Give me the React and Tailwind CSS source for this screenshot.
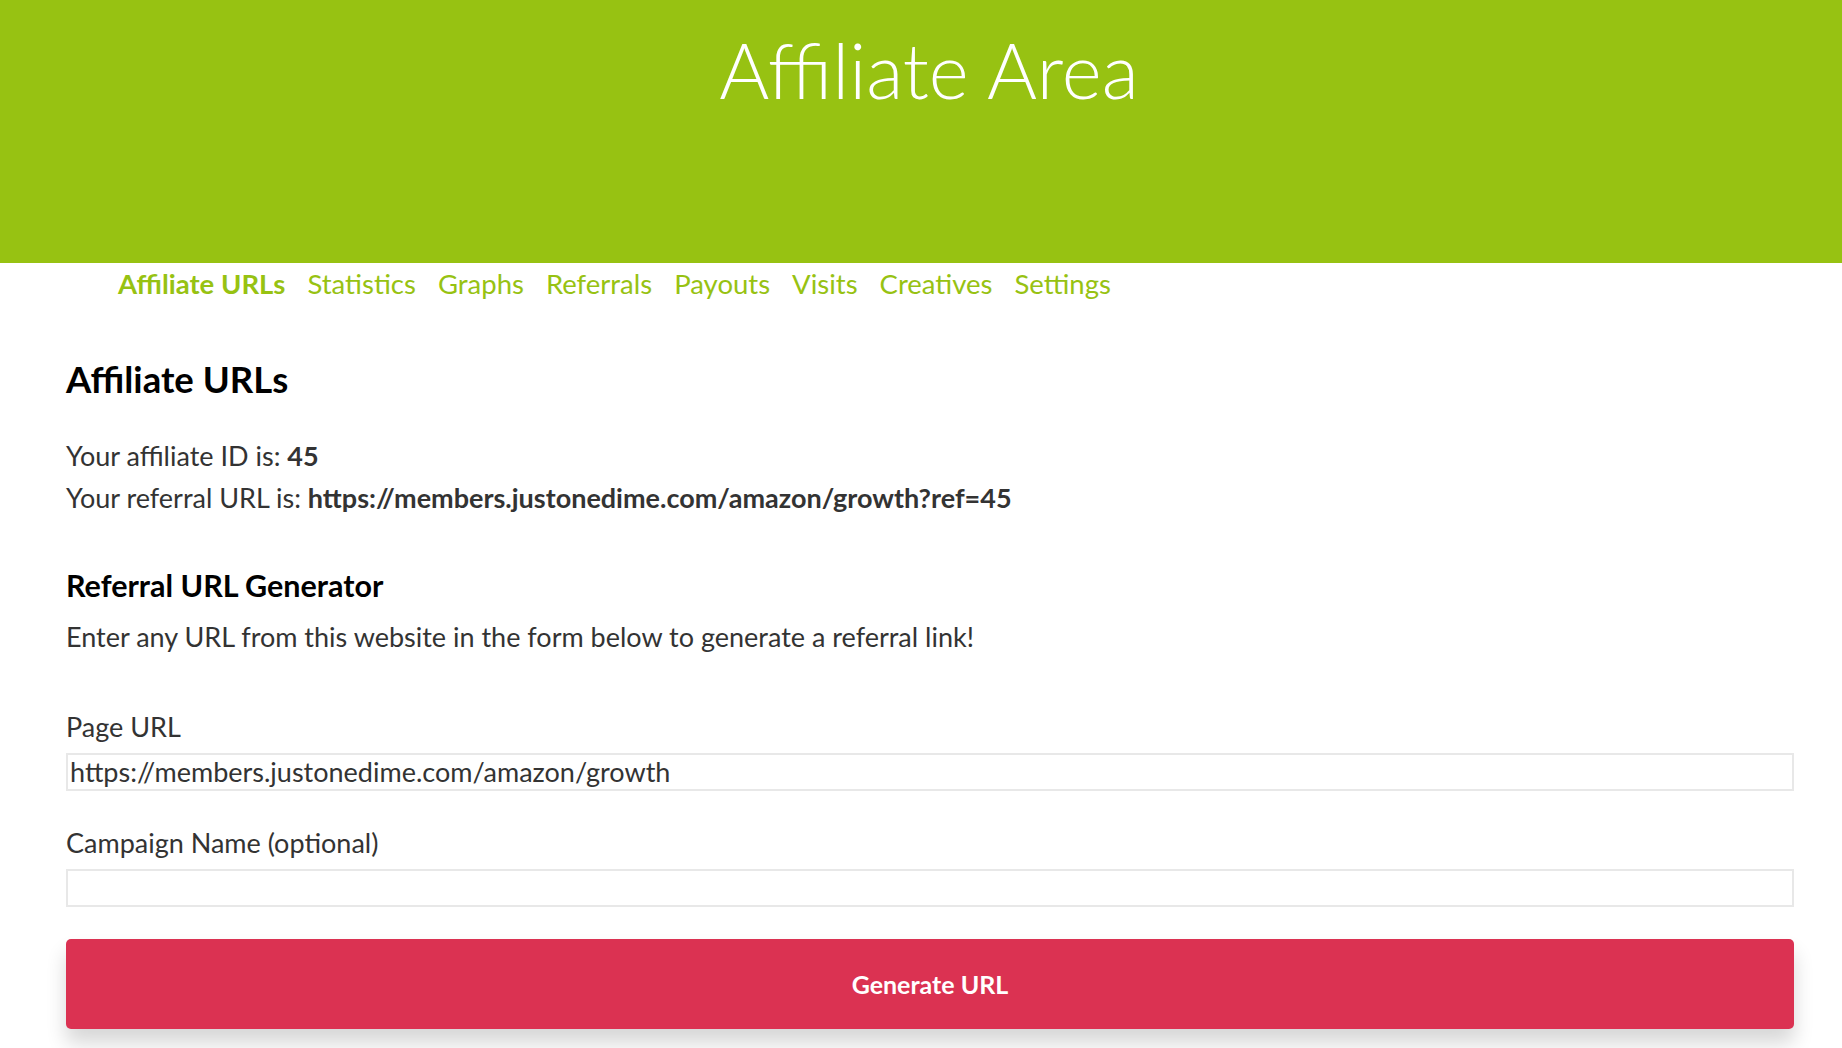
const navItems = ["Affiliate URLs", "Statistics", "Graphs", "Referrals", "Payouts", "Visits", "Creatives", "Settings"];

function Field({ label, value }) {
  return (
    <>
      <label className="text-[27px] leading-[40px] text-[#333]">{label}</label>
      <input
        readOnly
        value={value}
        className="mt-[6px] h-[38px] w-full border-2 border-[#e8e8e8] bg-white px-[2px] text-[27px] text-[#333] outline-none"
      />
    </>
  );
}

export default function App() {
  return (
    <div className="min-h-[1048px] bg-white font-['Lato','Noto_Sans',sans-serif] text-[#333]">
      <header className="h-[263px] bg-[#97c212] pl-[16px] pt-[24px] text-center">
        <h1 className="text-[76.5px] font-light leading-[1.2] text-white">Affiliate Area</h1>
      </header>

      <nav className="ml-[118px] mt-[4px] flex gap-[22px] text-[27.5px] leading-[1.2] text-[#97c212]">
        {navItems.map((item, i) => (
          <a key={item} href="#" className={i === 0 ? "font-bold" : ""}>
            {item}
          </a>
        ))}
      </nav>

      <main className="ml-[66px] mr-[48px] flex flex-col">
        <h2 className="mt-[58px] text-[36.5px] font-bold leading-[1.2] text-black">Affiliate URLs</h2>

        <div className="mt-[33px] text-[27px] leading-[42px]">
          <div>
            Your affiliate ID is: <strong className="font-bold">45</strong>
          </div>
          <div>
            Your referral URL is: <strong className="font-bold">https://members.justonedime.com/amazon/growth?ref=45</strong>
          </div>
        </div>

        <h3 className="mt-[48px] text-[30.5px] font-bold leading-[1.2] text-black">Referral URL Generator</h3>
        <p className="mt-[14px] text-[27px] leading-[40px]">
          Enter any URL from this website in the form below to generate a referral link!
        </p>

        <div className="mt-[50px] flex flex-col">
          <Field label="Page URL" value="https://members.justonedime.com/amazon/growth" />
          <div className="mt-[32px] flex flex-col">
            <Field label="Campaign Name (optional)" value="" />
          </div>
        </div>

        <button className="mt-[32px] h-[90px] w-full rounded-[5px] bg-[#db3252] text-[25px] font-bold text-white shadow-[0_14px_20px_rgba(0,0,0,0.16)]">
          Generate URL
        </button>
      </main>
    </div>
  );
}
